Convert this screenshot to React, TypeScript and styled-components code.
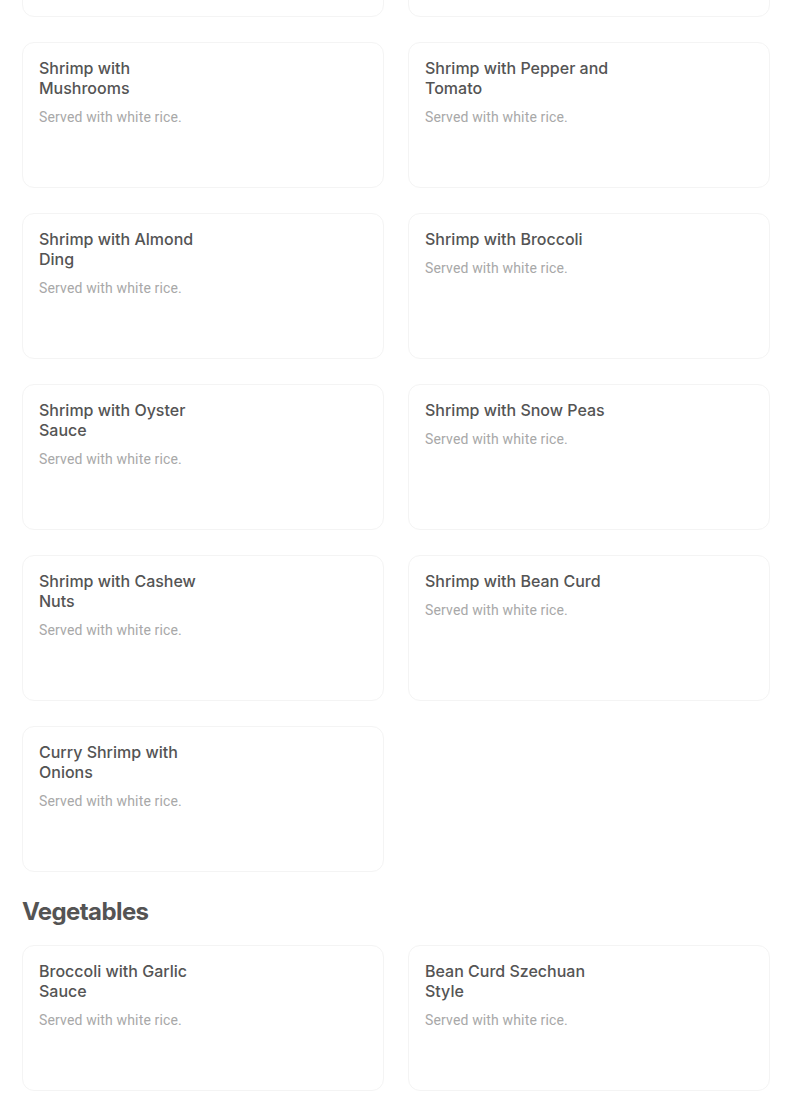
import React from 'react';
import styled, { createGlobalStyle } from 'styled-components';

const GlobalStyle = createGlobalStyle`
  html, body {
    margin: 0;
    padding: 0;
    background: #ffffff;
  }
  body {
    font-family: Inter, "Noto Sans", sans-serif;
    overflow: hidden;
  }
`;

// page is scrolled, so the row above only shows its bottom edge
const Page = styled.div`
  width: 748px;
  padding: 0 34px 0 22px;
  margin-top: -129px;
`;

const Section = styled.section`
  & + & {
    margin-top: 24px;
  }
`;

const SectionTitle = styled.h2`
  margin: 0 0 17px;
  font-family: Inter, sans-serif;
  font-size: 24px;
  line-height: 32px;
  font-weight: 700;
  letter-spacing: -0.6px;
  color: #545454;
`;

const Grid = styled.div`
  display: grid;
  grid-template-columns: 1fr 1fr;
  column-gap: 24px;
  row-gap: 25px;
`;

const Card = styled.div`
  box-sizing: border-box;
  height: 146px;
  padding: 15px 16px;
  border: 1px solid #f4f4f4;
  border-radius: 12px;
  background: #fff;
`;

const ItemName = styled.div`
  max-width: 184px;
  font-family: Inter, sans-serif;
  font-size: 16px;
  line-height: 20px;
  font-weight: 500;
  color: #545454;
`;

const ItemDesc = styled.div`
  margin-top: 9px;
  font-family: Roboto, sans-serif;
  font-size: 14px;
  line-height: 20px;
  letter-spacing: 0.15px;
  color: #a8a8a8;
`;

interface Item {
  name: string;
  desc: string;
}

const rice = 'Served with white rice.';

const menu: { title?: string; items: (Item | null)[] }[] = [
  {
    items: [
      null,
      null,
      { name: 'Shrimp with Mushrooms', desc: rice },
      { name: 'Shrimp with Pepper and Tomato', desc: rice },
      { name: 'Shrimp with Almond Ding', desc: rice },
      { name: 'Shrimp with Broccoli', desc: rice },
      { name: 'Shrimp with Oyster Sauce', desc: rice },
      { name: 'Shrimp with Snow Peas', desc: rice },
      { name: 'Shrimp with Cashew Nuts', desc: rice },
      { name: 'Shrimp with Bean Curd', desc: rice },
      { name: 'Curry Shrimp with Onions', desc: rice },
    ],
  },
  {
    title: 'Vegetables',
    items: [
      { name: 'Broccoli with Garlic Sauce', desc: rice },
      { name: 'Bean Curd Szechuan Style', desc: rice },
    ],
  },
];

const MenuCard = ({ item }: { item: Item | null }) => (
  <Card>
    {item && (
      <>
        <ItemName>{item.name}</ItemName>
        <ItemDesc>{item.desc}</ItemDesc>
      </>
    )}
  </Card>
);

export default function App() {
  return (
    <>
      <GlobalStyle />
      <Page>
        {menu.map((section, i) => (
          <Section key={i}>
            {section.title && <SectionTitle>{section.title}</SectionTitle>}
            <Grid>
              {section.items.map((item, j) => (
                <MenuCard key={j} item={item} />
              ))}
            </Grid>
          </Section>
        ))}
      </Page>
    </>
  );
}
